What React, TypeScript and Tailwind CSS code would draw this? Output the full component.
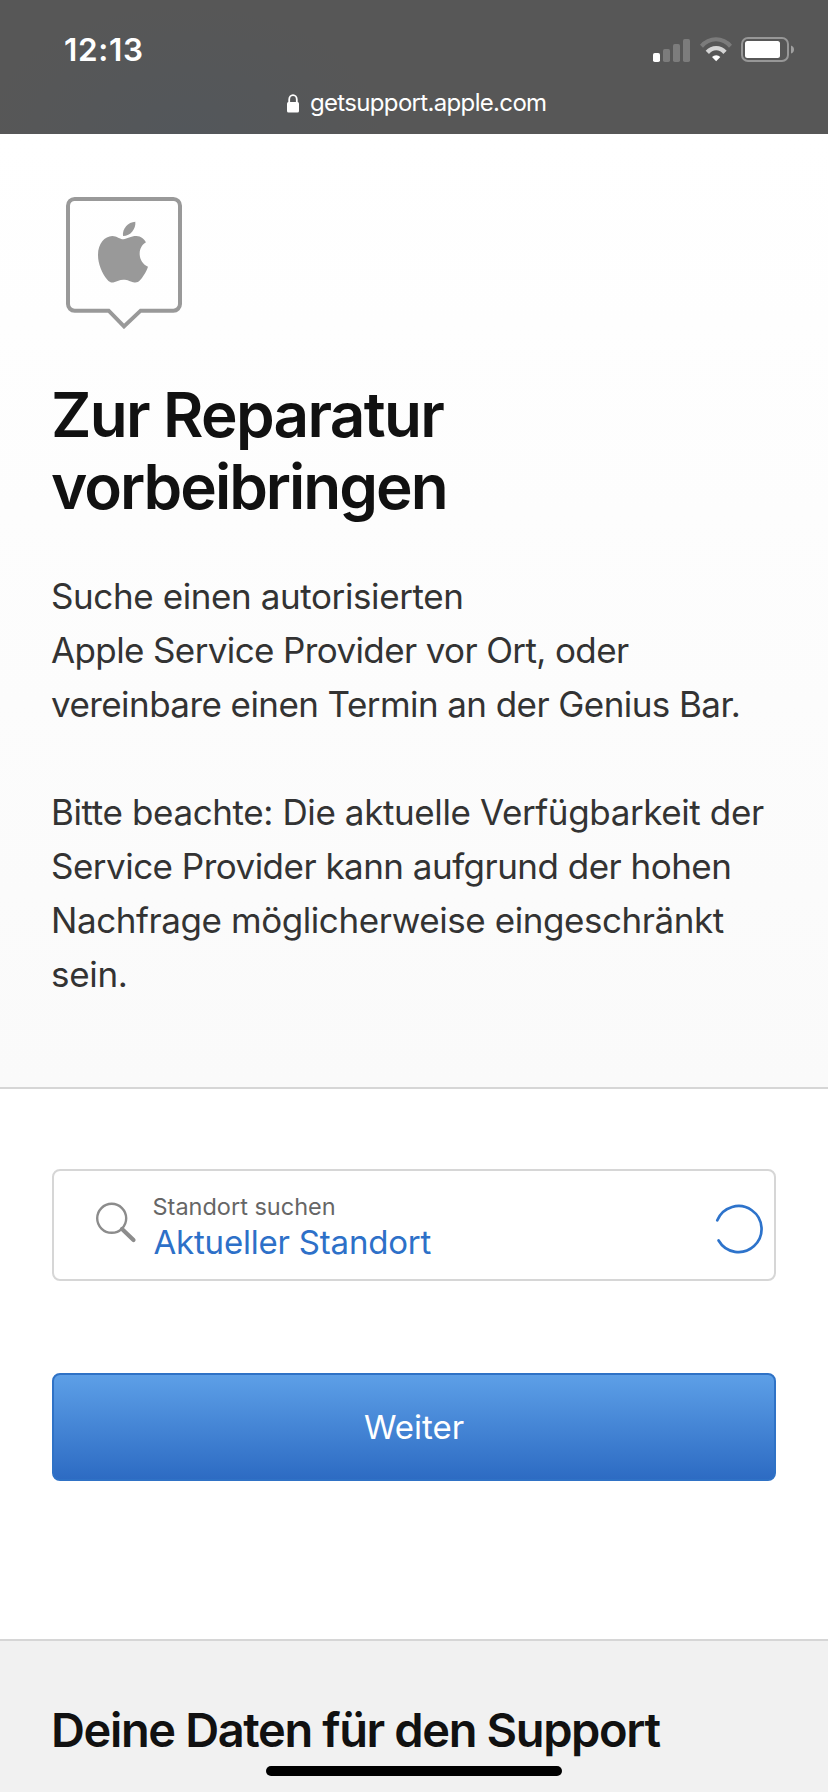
import React from 'react';

const StatusBar: React.FC = () => {
    return (
        <header className="flex h-[134px] flex-col bg-[#575757] bg-[radial-gradient(ellipse_200px_130px_at_185px_134px,#53575b,#575757)] text-white">
            <div className="flex h-[76px] items-start justify-between pt-[30px] pr-[33px] pl-16">
                <span className="text-[31.5px] leading-[40px] font-semibold tracking-[0.7px]">12:13</span>
                <div className="mt-[7px] flex items-end gap-[10px]">
                    <svg width="37" height="24" viewBox="0 0 37 24" fill="#fff">
                        <rect x="0" y="15" width="7" height="9" rx="1.8" />
                        <g opacity="0.22">
                            <rect x="10" y="11" width="7" height="13" rx="1.8" />
                            <rect x="20" y="6" width="7" height="18" rx="1.8" />
                            <rect x="30" y="1" width="7" height="23" rx="1.8" />
                        </g>
                    </svg>
                    <svg className="-mr-px" width="32" height="25" viewBox="208 50 96 75" fill="#fff">
                        <path opacity="0.22" d="M208 73A63.4 63.4 0 0 1 304 73L295 82A49.5 49.5 0 0 0 217 82Z" />
                        <path opacity="0.75" d="M225 91A42 42 0 0 1 288 91L278 101A26.5 26.5 0 0 0 235 101Z" />
                        <path d="M244 110A17 17 0 0 1 269 110L256.500 123Z" />
                    </svg>
                    <svg width="54" height="25" viewBox="0 0 54 25">
                        <rect x="1" y="1" width="46" height="23" rx="6" fill="none" stroke="#979797" strokeWidth="2" />
                        <rect x="4" y="4" width="35" height="17" rx="2.500" fill="#fff" />
                        <path d="M50 8.500Q53 9.500 53 12.500Q53 15.500 50 16.500Z" fill="#a0a0a0" />
                    </svg>
                </div>
            </div>
            <div className="flex items-center gap-[11px] pl-[287px]">
                <svg width="12" height="19" viewBox="0 0 12 19">
                    <path d="M2.200 9V5.500a3.800 4.300 0 0 1 7.600 0V9" fill="none" stroke="#fff" strokeWidth="1.800" />
                    <rect y="8" width="12" height="10.500" rx="1.500" fill="#fff" />
                </svg>
                <span className="text-[24px] leading-[54px] tracking-[-0.67px] whitespace-nowrap">getsupport.apple.com</span>
            </div>
        </header>
    );
};

const SupportBubble: React.FC = () => {
    return (
        <svg className="ml-[15px]" width="116" height="132" viewBox="78 51 348 396">
            <path
                d="M104 57H400A20 20 0 0 1 420 77V372A20 20 0 0 1 400 392H302L252 439L206 392H104A20 20 0 0 1 84 372V77A20 20 0 0 1 104 57Z"
                fill="none"
                stroke="#999"
                strokeWidth="12"
            />
            <path
                d="M250 178C262 176 272 168 289 168C303 168 313 178 318 187C306 194 299 206 299 221C299 239 309 254 324 260C319 276 307 293 300 301C295 307 288 309 280 307C270 304 264 299 250 299C238 299 232 304 222 307C214 309 207 305 202 299C186 280 174 252 174 225C174 190 194 169 217 168C230 168 240 178 250 178Z"
                fill="#999"
            />
            <path d="M249 168C246 146 264 126 286 125C288 146 272 168 249 168Z" fill="#999" />
        </svg>
    );
};

const App: React.FC = () => {
    return (
        <div className="relative flex h-[1792px] w-[828px] flex-col overflow-hidden bg-white font-['Inter','Liberation_Sans',sans-serif] text-[#333]">
            <StatusBar />

            <section className="h-[955px] border-b-2 border-[#d6d6d6] bg-linear-to-b from-white to-[#fafafa] px-[51px] pt-[63px]">
                <SupportBubble />
                <h1 className="mt-[50px] text-[62px] leading-[72px] font-semibold whitespace-nowrap text-[#111]">
                    <span className="block tracking-[-1.68px]">Zur Reparatur</span>
                    <span className="block tracking-[-2px]">vorbeibringen</span>
                </h1>
                <p className="mt-[46px] text-[35px] leading-[54px] whitespace-nowrap">
                    <span className="block tracking-[-0.4px]">Suche einen autorisierten</span>
                    <span className="block tracking-[-0.62px]">Apple Service Provider vor Ort, oder</span>
                    <span className="block tracking-[-0.57px]">vereinbare einen Termin an der Genius Bar.</span>
                </p>
                <p className="mt-[54px] text-[35px] leading-[54px] whitespace-nowrap">
                    <span className="block tracking-[-0.39px]">Bitte beachte: Die aktuelle Verfügbarkeit der</span>
                    <span className="block tracking-[-0.52px]">Service Provider kann aufgrund der hohen</span>
                    <span className="block tracking-[-0.43px]">Nachfrage möglicherweise eingeschränkt</span>
                    <span className="block tracking-[-0.3px]">sein.</span>
                </p>
            </section>

            <section className="h-[550px] px-[52px] pt-20">
                <div className="flex h-28 items-start rounded-lg border-2 border-[#d6d6d6]">
                    <svg className="mt-[31px] ml-[41px]" width="42" height="42" viewBox="0 0 42 42" fill="none" stroke="#8c8c8c">
                        <circle cx="16.700" cy="16.300" r="14.500" strokeWidth="2.400" />
                        <path d="M27 27L38.500 38" strokeWidth="4.200" strokeLinecap="round" />
                    </svg>
                    <div className="mt-[21px] ml-[15.5px] flex flex-col whitespace-nowrap">
                        <span className="text-[23.5px] leading-[30px] text-[#666]">Standort suchen</span>
                        <span className="ml-px text-[33px] leading-[40px] tracking-[-0.2px] text-[#2d70c8]">Aktueller Standort</span>
                    </div>
                    <svg className="mt-[33px] mr-[11px] ml-auto" width="50" height="50" viewBox="0 0 50 50" fill="none" stroke="#2d73cb" strokeWidth="2.700" strokeLinecap="round">
                        <path d="M4.300 16.300A23 23 0 1 1 5.600 36.500" />
                    </svg>
                </div>
                <button className="mt-[92px] flex h-[108px] w-full items-center justify-center rounded-lg border-2 border-[#2f72c6] bg-linear-to-b from-[#5d9fe7] to-[#2d6bc3] pt-0.5 text-[33px] text-white">
                    Weiter
                </button>
            </section>

            <section className="flex-1 border-t-2 border-[#d6d6d6] bg-[#f1f1f1] px-[51px] pt-[59px]">
                <h2 className="text-[47px] leading-[60px] font-semibold tracking-[-1.38px] whitespace-nowrap text-[#111]">
                    Deine Daten für den Support
                </h2>
            </section>

            {/* home indicator */}
            <div className="absolute bottom-4 left-[266px] h-[10px] w-[296px] rounded-full bg-black" />
        </div>
    );
};

export default App;
